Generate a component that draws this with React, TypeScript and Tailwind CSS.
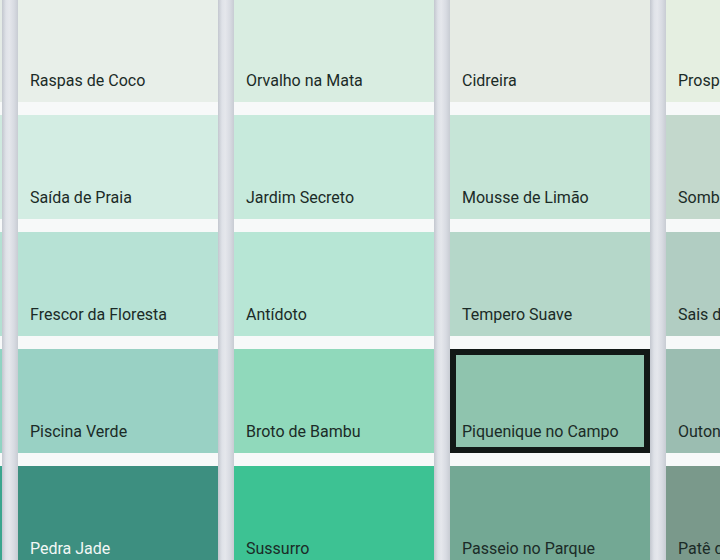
import React from 'react';

interface Swatch {
  name: string;
  color: string;
  light?: boolean;
}

const columns: Swatch[][] = [
  [
    { name: '', color: '#e4ebe6' },
    { name: '', color: '#cfe9df' },
    { name: '', color: '#b3e0d2' },
    { name: '', color: '#8fd3c2' },
    { name: '', color: '#3aa58e' },
  ],
  [
    { name: 'Raspas de Coco', color: '#e8efe9' },
    { name: 'Saída de Praia', color: '#d3ede3' },
    { name: 'Frescor da Floresta', color: '#b7e2d5' },
    { name: 'Piscina Verde', color: '#99d1c4' },
    { name: 'Pedra Jade', color: '#3d8f80', light: true },
  ],
  [
    { name: 'Orvalho na Mata', color: '#d9ede1' },
    { name: 'Jardim Secreto', color: '#c7eadc' },
    { name: 'Antídoto', color: '#b7e6d5' },
    { name: 'Broto de Bambu', color: '#90d9bb' },
    { name: 'Sussurro', color: '#3dc293' },
  ],
  [
    { name: 'Cidreira', color: '#e6ebe4' },
    { name: 'Mousse de Limão', color: '#c6e5d7' },
    { name: 'Tempero Suave', color: '#b5d7c9' },
    { name: 'Piquenique no Campo', color: '#8fc4ae' },
    { name: 'Passeio no Parque', color: '#73a894' },
  ],
  [
    { name: 'Prosperidade', color: '#e5efe1' },
    { name: 'Sombra Fresca', color: '#c3d8cc' },
    { name: 'Sais de Banho', color: '#b1cdc2' },
    { name: 'Outono Verde', color: '#9bbdb1' },
    { name: 'Patê de Ervas', color: '#7a998b' },
  ],
];

const selected = 'Piquenique no Campo';

function Rail() {
  return (
    <div className="w-4 shrink-0 self-stretch bg-[linear-gradient(to_right,#c3c7cf_0%,#dfe2e8_25%,#e5e7ec_45%,#d8dbe2_75%,#c8ccd3_100%)]" />
  );
}

function SwatchCard({ swatch }: { swatch: Swatch }) {
  const isSelected = swatch.name === selected;
  return (
    <div
      className={
        'h-[104px] flex flex-col justify-end px-3 pb-[9px] ' +
        (isSelected ? 'shadow-[inset_0_0_0_6px_#121917]' : '')
      }
      style={{ backgroundColor: swatch.color }}
    >
      <span
        className={
          'text-base leading-6 whitespace-nowrap ' +
          (swatch.light ? 'text-[#f2f7f5]' : 'text-[#1b2b27]')
        }
      >
        {swatch.name}
      </span>
    </div>
  );
}

export default function App() {
  return (
    <div
      className="w-[720px] h-[560px] overflow-hidden bg-[#f7f9f9]"
      style={{ fontFamily: 'Roboto, "Noto Sans", sans-serif' }}
    >
      <div className="flex -ml-[198px] -mt-[2px]">
        {columns.map((col, i) => (
          <div key={i} className="flex shrink-0">
            {i > 0 && <Rail />}
            <div className="w-[200px] shrink-0 flex flex-col gap-[13px]">
              {col.map((s, j) => (
                <SwatchCard key={j} swatch={s} />
              ))}
            </div>
          </div>
        ))}
      </div>
    </div>
  );
}
